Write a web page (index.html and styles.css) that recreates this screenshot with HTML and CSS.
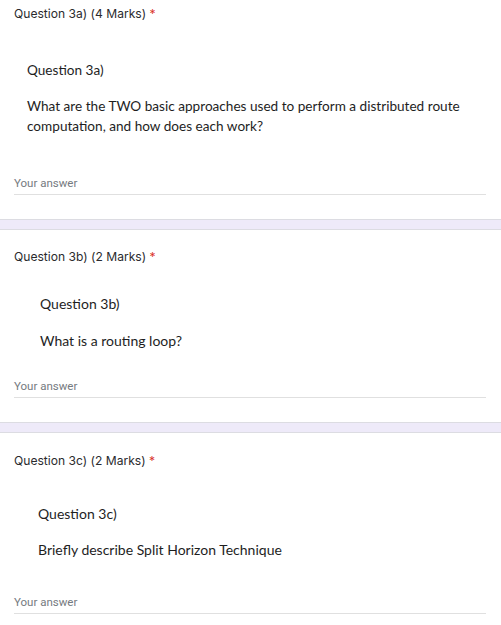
FILE: index.html
```html
<!DOCTYPE html>
<html>
<head>
<meta charset="utf-8">
<link rel="stylesheet" href="styles.css">
</head>
<body>
<div class="form">
  <section class="card card-first">
    <div class="title">Question 3a) (4 Marks) <span class="req">*</span></div>
    <div class="qimg qimg-a">
      <p class="qhead">Question 3a)</p>
      <p class="qbody">What are the TWO basic approaches used to perform a distributed route computation, and how does each work?</p>
    </div>
    <div class="answer answer-a">Your answer</div>
  </section>
  <div class="band"></div>
  <section class="card card-b">
    <div class="title">Question 3b) (2 Marks) <span class="req">*</span></div>
    <div class="qimg qimg-b">
      <p class="qhead">Question 3b)</p>
      <p class="qbody">What is a routing loop?</p>
    </div>
    <div class="answer answer-b">Your answer</div>
  </section>
  <div class="band"></div>
  <section class="card card-c">
    <div class="title">Question 3c) (2 Marks) <span class="req">*</span></div>
    <div class="qimg qimg-c">
      <p class="qhead">Question 3c)</p>
      <p class="qbody">Briefly describe Split Horizon Technique</p>
    </div>
    <div class="answer answer-c">Your answer</div>
  </section>
</div>
</body>
</html>
```
FILE: styles.css
```css
html, body {
  margin: 0;
  padding: 0;
  background: #ffffff;
}
.form {
  width: 501px;
  display: flex;
  flex-direction: column;
}
.card {
  padding: 0 15px 24px 14px;
  display: flex;
  flex-direction: column;
}
.card-first { padding-top: 4px; }
.card-b { padding-top: 17px; }
.card-c { padding-top: 18px; }
.title {
  font-family: Inter, Roboto, "Liberation Sans", sans-serif;
  font-size: 12.1px;
  line-height: 20px;
  color: #2a2b2e;
}
.req { color: #d93025; }
.qimg {
  font-family: Lato, "Open Sans", sans-serif;
  font-size: 14px;
  color: #1e1e1e;
}
.qimg p {
  margin: 0;
  line-height: 20px;
}
.qimg-a { margin-top: 36px; padding-left: 13px; font-size: 13.6px; }
.qimg-a .qbody { margin-top: 16px; }
.qimg-b { margin-top: 27px; padding-left: 26px; }
.qimg-b .qbody { margin-top: 17px; }
.qimg-c { margin-top: 33px; padding-left: 24px; }
.qimg-c .qbody { margin-top: 16px; }
.answer {
  font-family: Roboto, "Liberation Sans", sans-serif;
  font-size: 11.5px;
  line-height: 16px;
  color: #757a80;
  padding-bottom: 3px;
  border-bottom: 1px solid #e0e0e0;
}
.answer-a { margin-top: 39px; }
.answer-b { margin-top: 27px; }
.answer-c { margin-top: 34px; }
.band {
  height: 9px;
  background: #eeeaf9;
  border-top: 1px solid #dcdce2;
  border-bottom: 1px solid #dcdce2;
}
```
